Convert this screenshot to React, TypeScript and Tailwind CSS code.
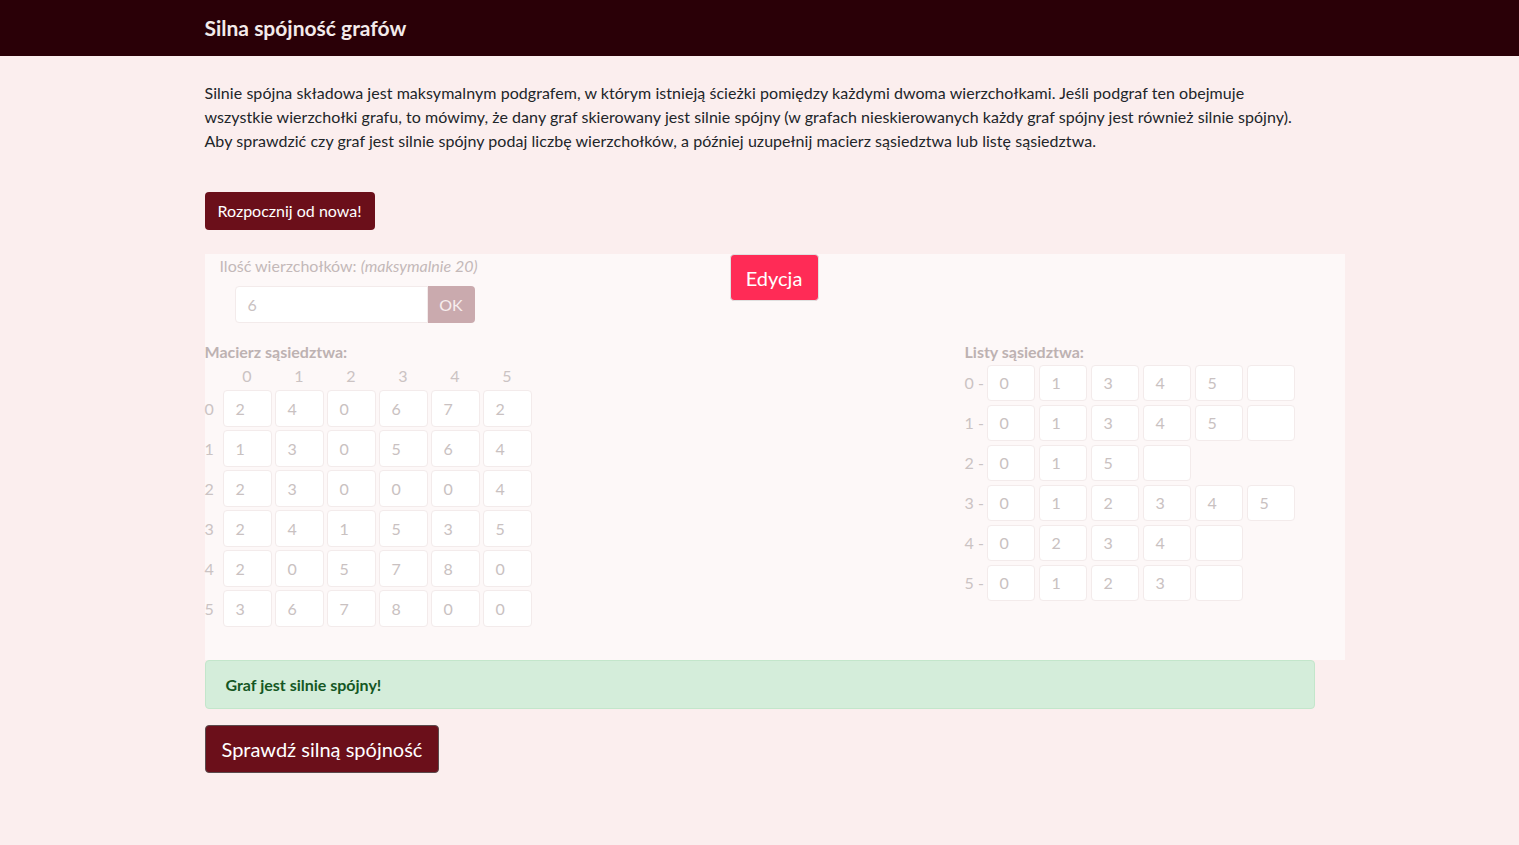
const matrix = [
  [2, 4, 0, 6, 7, 2],
  [1, 3, 0, 5, 6, 4],
  [2, 3, 0, 0, 0, 4],
  [2, 4, 1, 5, 3, 5],
  [2, 0, 5, 7, 8, 0],
  [3, 6, 7, 8, 0, 0],
]

const lists: string[][] = [
  ['0', '1', '3', '4', '5', ''],
  ['0', '1', '3', '4', '5', ''],
  ['0', '1', '5', ''],
  ['0', '1', '2', '3', '4', '5'],
  ['0', '2', '3', '4', ''],
  ['0', '1', '2', '3', ''],
]

const Cell = ({ value, w = 'w-[49px] h-[37px]' }: { value: string | number; w?: string }) => (
  <div className={`${w} bg-white border border-[#f3ebeb] rounded-[4px] pl-[12px] flex items-center text-[#c9c1c1]`}>
    {value}
  </div>
)

export default function App() {
  return (
    <div className="min-h-[845px] bg-[#fbeeee] text-[16px] text-[#212529]" style={{ fontFamily: 'Lato, "Noto Sans", sans-serif' }}>
      <header className="h-[56px] bg-[#2a0007] flex items-center">
        <div className="w-[1110px] mx-auto">
          <h1 className="text-[21px] font-bold text-[#f3eaea]">Silna spójność grafów</h1>
        </div>
      </header>

      <main className="w-[1110px] mx-auto">
        <p className="pt-[25px] leading-[24px] whitespace-nowrap tracking-[0.05px]">
          Silnie spójna składowa jest maksymalnym podgrafem, w którym istnieją ścieżki pomiędzy każdymi dwoma wierzchołkami. Jeśli podgraf ten obejmuje
          <br />
          wszystkie wierzchołki grafu, to mówimy, że dany graf skierowany jest silnie spójny (w grafach nieskierowanych każdy graf spójny jest również silnie spójny).
          <br />
          Aby sprawdzić czy graf jest silnie spójny podaj liczbę wierzchołków, a później uzupełnij macierz sąsiedztwa lub listę sąsiedztwa.
        </p>

        <button className="mt-[39px] h-[38px] px-[13px] bg-[#6b0f1a] text-white rounded-[4px]">
          Rozpocznij od nowa!
        </button>

        <section className="mt-[24px] w-[1140px] h-[406px] bg-[#fdf8f8]">
          <div className="flex">
            <div className="w-[525px] pl-[15px]">
              <div className="text-[#c4b9b9] leading-[24px]">
                Ilość wierzchołków: <i>(maksymalnie 20)</i>
              </div>
              <div className="flex mt-[8px] ml-[15px]">
                <div className="w-[193px] h-[37px] bg-white border border-[#f3ebeb] rounded-l-[4px] pl-[12px] flex items-center text-[#c9c1c1]">6</div>
                <div className="w-[47px] h-[37px] bg-[#caaaae] rounded-r-[4px] flex items-center justify-center text-[#f7eeee]">OK</div>
              </div>
            </div>
            <button className="w-[89px] h-[47px] bg-[#ff2b56] text-white text-[20px] rounded-[4px] border border-[#e0e0e0]">
              Edycja
            </button>
          </div>

          <div className="flex mt-[17px]">
            <div className="w-[760px]">
              <div className="font-bold text-[#bdb2b2] leading-[24px]">Macierz sąsiedztwa:</div>
              <div className="flex ml-[18px] gap-[3px] text-[#cbc3c3] leading-[24px]">
                {matrix.map((_, i) => (
                  <div key={i} className="w-[49px] text-center">{i}</div>
                ))}
              </div>
              <div className="flex flex-col gap-[3px] mt-[2px]">
                {matrix.map((row, r) => (
                  <div key={r} className="flex items-center">
                    <div className="w-[18px] text-[#cbc3c3]">{r}</div>
                    <div className="flex gap-[3px]">
                      {row.map((v, c) => (
                        <Cell key={c} value={v} />
                      ))}
                    </div>
                  </div>
                ))}
              </div>
            </div>
            <div className="w-[380px]">
              <div className="font-bold text-[#bdb2b2] leading-[24px]">Listy sąsiedztwa:</div>
              <div className="flex flex-col gap-[4px] mt-[1px]">
                {lists.map((row, r) => (
                  <div key={r} className="flex items-center">
                    <div className="w-[22px] text-[#cbc3c3]">{r} -</div>
                    <div className="flex gap-[4px]">
                      {row.map((v, c) => (
                        <Cell key={c} value={v} w="w-[48px] h-[36px]" />
                      ))}
                    </div>
                  </div>
                ))}
              </div>
            </div>
          </div>
        </section>

        <div className="h-[49px] bg-[#d4edda] border border-[#c3e6cb] rounded-[4px] flex items-center px-[20px] font-bold text-[#155724]">
          Graf jest silnie spójny!
        </div>

        <button className="mt-[16px] h-[48px] px-[16px] bg-[#6b0f1a] text-white text-[20px] rounded-[4px] border border-[#5a4a4c]">
          Sprawdź silną spójność
        </button>
      </main>
    </div>
  )
}
